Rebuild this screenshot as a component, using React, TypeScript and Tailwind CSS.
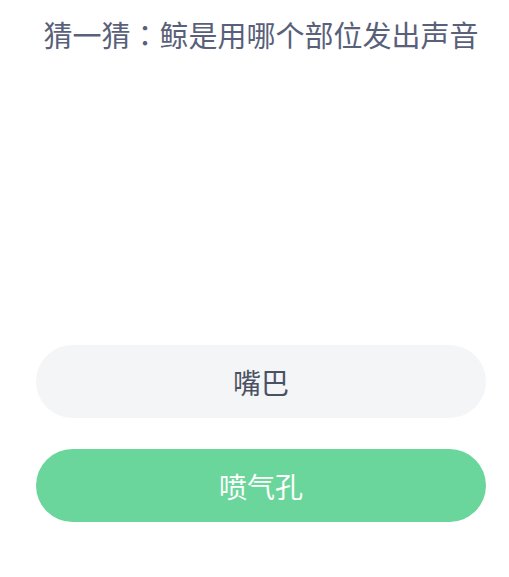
import React from "react";

const options = [
  { label: "嘴巴", correct: false },
  { label: "喷气孔", correct: true },
];

export default function App() {
  return (
    <div
      className="flex h-[577px] w-[509px] flex-col bg-white"
      style={{ fontFamily: '"Noto Sans CJK SC", "Noto Sans", sans-serif' }}
    >
      <h1 className="pt-[13px] pl-[13px] text-center text-[29px] leading-[42px] font-normal text-[#596079]">
        猜一猜<span style={{ fontFamily: '"Noto Sans CJK TC", sans-serif' }}>：</span>鲸是用哪个部位发出声音
      </h1>

      <div className="mt-[290px] ml-[36px] mr-[23px] flex flex-col gap-[31px]">
        {options.map((o) => (
          <button
            key={o.label}
            className={`flex h-[73px] items-center justify-center rounded-full text-[28px] ${
              o.correct ? "bg-[#6bd69b] text-white" : "bg-[#f3f5f7] text-[#4b5162]"
            }`}
          >
            {o.label}
          </button>
        ))}
      </div>
    </div>
  );
}
